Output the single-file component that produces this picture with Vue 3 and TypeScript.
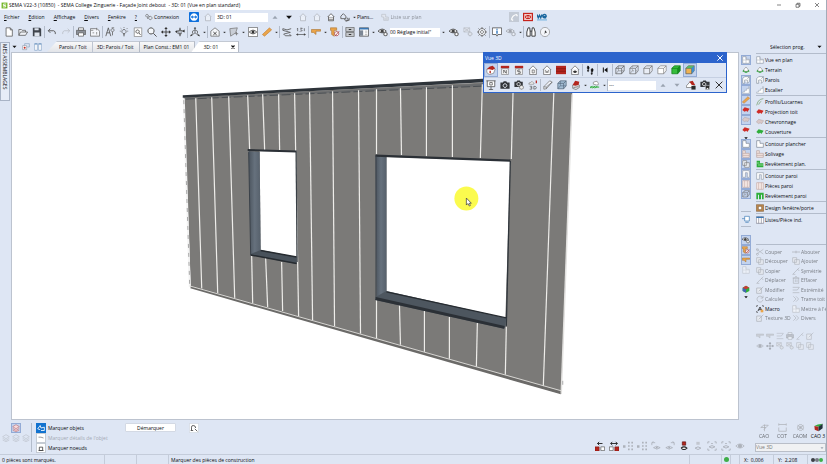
<script setup lang="ts">
import { h, ref } from 'vue'

type Shape = [d: string, fill?: string, stroke?: string, width?: number]

const dark = '#3f444c'
const red = '#b3261e'
const green = '#2fae3a'
const blue = '#3a78b5'
const orange = '#eba54a'

const house = 'M2 6 L6 2 L10 6 M3 5.5 V10.5 H9 V5.5'
const cube = 'M1 4 L4 1 H11 V7 L8 10.500 H1 Z M1 4 H8 V10.500 M8 4 L11 1'
const eye = 'M1 6 Q6 1 11 6 Q6 11 1 6 Z'
const page = 'M2.500 1 H7.500 L10 3.500 V11 H2.500 Z M7.500 1 V3.500 H10'
const gear = 'M6 3.500 A2.500 2.500 0 1 0 6.010 3.500 Z'

const icons: Record<string, Shape[]> = {
  logo: [['M1 1 H11 V11 H1 Z', '#6fb31e'], ['M9 3.500 H4 V6 H8 V8.500 H3', 'none', '#fff', 1.6]],
  minimize: [['M2 6 H10', 'none', '#333', 1.2]],
  restore: [['M2 4.500 H8 V10.500 H2 Z M4 4.500 V2.500 H10 V8.500 H8', 'none', '#333', 1.2]],
  close: [['M2 2 L10 10 M10 2 L2 10', 'none', '#333', 1.2]],
  closeLight: [['M2 2 L10 10 M10 2 L2 10', 'none', '#fff', 1.5]],
  closeBold: [['M3 3 L9 9 M9 3 L3 9', 'none', '#111', 2.2]],
  keys: [['M3 2 A2 2 0 1 0 3.010 2 M4 6 V9 M8 5 A2.500 2.500 0 1 0 8.010 5 M5 4 L7 6', 'none', '#666', 1]],
  viewer: [['M1 0 H11 Q12 0 12 1 V11 Q12 12 11 12 H1 Q0 12 0 11 V1 Q0 0 1 0', '#0d6fdc'], ['M6 1.500 A4.500 4.500 0 1 0 6.010 1.500', '#fff'], ['M2 6 L4.500 4 V5.300 H7.500 V4 L10 6 L7.500 8 V6.700 H4.500 V8 Z', '#0d6fdc']],
  house: [[house, '#fff', '#6c727b', 1]],
  houseFloor: [[house, '#fff', '#555', 1], ['M3.500 7 H8.500 M3.500 9 H8.500', 'none', '#888', 1]],
  up: [['M3 8 L6 4.500 L9 8 Z', '#9aa3b0']],
  down: [['M2.500 4.500 H9.500 L6 8.500 Z', '#111']],
  downGrey: [['M3 4.500 H9 L6 8 Z', '#9aa3b0']],
  dot: [['M4.500 5 H7.500 L6 7 Z', '#222', '#222', 0.6]],
  link: [['M1 5 L4 2 L7 5 V8 H1 Z M6 8 A2 2 0 1 0 8 7 M7 10 L11 10 V7', 'none', '#555', 1]],
  list: [['M1 2 H7 V6 H11 V11 H4 V6 H1 Z', '#e4e8ef', '#888', 1], ['M5 8 H10 M5 9.500 H10', 'none', '#888', 0.7]],
  phone: [['M0 0 H12 V12 H0 Z', '#c3cad5'], ['M3 9 Q4 4 9 3 M3 9 L5 10 M9 3 L10 5', 'none', '#fff', 1.5]],
  mail: [['M0 1 H12 V11 H0 Z', '#c6231d'], ['M2 3 H10 V9 H2 Z M2 3 L6 6.500 L10 3 M2 9 L5 6 M10 9 L7 6', 'none', '#fff', 0.9]],
  we: [['M0 3 L1.500 7 L3 4 L4.500 7 L6 3 M7 5.500 H11 Q11 3 9 3 Q7 3 7 5.500 Q7 7.500 11 7', 'none', '#19679f', 1.6], ['M0 9.500 H12', 'none', '#4fa4d8', 1]],
  newFile: [[page, '#fff', '#555', 0.9]],
  open: [['M1 10 V3 H4 L5 4 H9 V6 M1 10 L3 6 H11.500 L9 10 Z', '#eef1f6', '#555', 0.9]],
  save: [['M1 1 H9.500 L11 2.500 V11 H1 Z', dark], ['M3 1.500 H8 V4 H3 Z M3 6.500 H9 V11 H3 Z', '#dfe5ee']],
  undo: [['M4 2 L1.500 4.500 L4 7 M1.500 4.500 H8 Q10.500 5 10 8.500', 'none', '#555', 1.1]],
  redo: [['M8 2 L10.500 4.500 L8 7 M10.500 4.500 H4 Q1.500 5 2 8.500', 'none', '#888', 1]],
  print: [['M3 1 H9 V4 H3 Z', '#fff', '#555', 0.9], ['M0.500 4 H11.500 V9 H0.500 Z', '#8b9098', '#555', 0.8], ['M3 7 H9 V11 H3 Z', '#fff', '#555', 0.8]],
  plot: [['M7 2 H0.500 V11 H11.500 V5 L8.500 2 H7', '#f4f6fa', '#666', 0.9], ['M8 1 V4 M8 6 V9 M3 7 H5 M1 4 H4', 'none', '#777', 0.9]],
  lamp: [['M1 11 L4 1 L7 11 M2 7 H6', 'none', '#555', 1], ['M9 2 A1.800 1.800 0 1 0 9.010 2 M9 6 V10 M8 1 H11', 'none', '#666', 1]],
  bulb: [['M6 3 A2.500 2.500 0 1 0 6.010 3 M5 9 H7 M5 10.500 H7 M6 0 V1 M1 5 H2 M10 5 H11 M2 1.500 L3 2.500 M10 1.500 L9 2.500', 'none', '#555', 0.9]],
  preview: [['M1.500 1 H10.500 V11.500 H1.500 Z', '#fff', '#777', 0.8], ['M5.500 3.500 A2 2 0 1 0 5.510 3.500 M7 7 L9 9.500', 'none', '#444', 1]],
  zoom: [['M4.800 1 A3.700 3.700 0 1 0 4.810 1 M7.500 7.500 L11.500 11.500', '#f4f7fb', '#555', 1.2]],
  move: [['M6 1 V11 M1 6 H11', 'none', '#333', 1], ['M6 0 L8 2.500 H4 Z M6 12 L8 9.500 H4 Z M0 6 L2.500 4 V8 Z M12 6 L9.500 4 V8 Z', '#333']],
  orbit: [['M1 6 Q6 2 11 5 M1 6 Q4 9 8 8 M6 1 Q3 6 6 11 Q9 6 6 1', 'none', '#555', 0.9], ['M0 5 L3 4 L2.500 7 Z M11.500 3 V6.500 L8.500 5 Z', '#333']],
  axes: [['M6 0.500 V7 M6 7 L1 10.500 M6 7 L11 10.500 M3 8 V5 L6 3.500 L9 5 V8', 'none', '#555', 0.9], ['M6 0 L7.500 2 H4.500 Z M0 11 L3 10.500 L1.500 8.500 Z M12 11 L9 10.500 L10.500 8.500 Z', '#444']],
  houseX: [['M1 5 L6 1 L11 5 V11 H1 Z', '#f5f7fa', '#666', 0.9], ['M4 6 L8 9.500 M8 6 L4 9.500', 'none', '#333', 1]],
  plane: [['M1 2 L10 1 L8 7 L2 11 Z', '#c9ced6', '#777', 0.9], ['M7 8 L11 8 M9 6 V10', 'none', '#777', 1]],
  eyeBox: [['M0.500 0.500 H11.500 V11.500 H0.500 Z', '#fff', '#555', 0.8], ['M1.500 6 Q6 1.500 10.500 6 Q6 10.500 1.500 6 Z', '#fff', '#444', 1], ['M6 4.200 A1.800 1.800 0 1 0 6.010 4.200', '#333']],
  beam: [['M0.500 9 L9 1 L11.500 3.500 L3 11 Z', orange, '#bd7a2f', 0.7]],
  stack: [['M1 2 L6 3.500 L11 2 M1 4 L10 6.500 M10 6.500 L2 8.500 M2 8.500 L4 10.500 H11 L9 8.500 M1 2 V4', 'none', '#555', 1]],
  measure: [['M1 2.500 L2 1.500 V5 M4 4.800 V5.200 M5 1.500 H7.500 L6 3 L7.500 4.500 L5 5 M10 1.500 V5 M1 9 H11', 'none', '#444', 0.8], ['M0 9 L2.500 7.500 V10.500 Z M12 9 L9.500 7.500 V10.500 Z', '#444']],
  roof: [['M0.500 3 H11.500 V5 H6 V9 L3 6.500 H0.500 Z', orange, '#a5702f', 0.7]],
  roofGear: [['M0.500 1 H8 V4 H5 V11 L2 9 V4 H0.500 Z', orange, '#a5702f', 0.7], ['M8 5.500 A2.500 2.500 0 1 0 8.010 5.500 M6 11 L11 5', '#fff', '#a33', 0.9]],
  cabinet: [['M1 0.500 H11 V5.500 H1 Z M1 6.500 H11 V11.500 H1 Z', '#c5c8cc', '#666', 0.9], ['M4.500 3 H7.500 M4.500 9 H7.500', 'none', '#333', 1.3]],
  panelWin: [['M0.500 1 H11.500 V11 H0.500 Z', '#fff', '#444', 0.9], ['M0.500 1 H11.500 V3 H0.500 Z', blue], ['M1 4 H5 V10.500 H1 Z', '#7c8795'], ['M7 5 H10 M7 7 H10 M7 9 H10', 'none', '#999', 0.7]],
  eyeGear: [['M0 5 Q5 0 10 5 Q5 9 0 5 Z', '#fff', '#444', 1], ['M5 3 A2 2 0 1 0 5.010 3', '#444'], ['M9 6.500 A2 2 0 1 0 9.010 6.500', '#fff', '#666', 1.3]],
  layersGear: [['M1 1 H8 V6 H1 Z M1 1 L8 6 M8 1 L1 6', '#e4e8ee', '#777', 0.8], ['M8.500 6 A2.300 2.300 0 1 0 8.510 6', '#ddd', '#777', 1.2]],
  gear: [['M6 1.800 A4.200 4.200 0 1 0 6.010 1.800', '#f1f4f9', '#666', 1], ['M6 4.200 A1.800 1.800 0 1 0 6.010 4.200 M6 0 V2 M6 10 V12 M0 6 H2 M10 6 H12 M1.800 1.800 L3 3 M10.200 1.800 L9 3 M1.800 10.200 L3 9 M10.200 10.200 L9 9', 'none', '#666', 1]],
  info: [['M0.500 1 H11.500 V9 H7 L6 11 L5 9 H0.500 Z', '#fff', '#444', 0.9], ['M6 2 V3.300 M6 4.300 V8', 'none', '#1765b5', 1.5]],
  binoc: [['M1 11 V6 L2.500 1 H4.500 L5 6 V11 Z M7 11 V6 L7.500 1 H9.500 L11 6 V11 Z M5 5 H7', '#fff', '#333', 1.1]],
  disc: [['M6 0.500 A5.500 5.500 0 1 0 6.010 0.500', '#f3f5f9', '#888', 0.8], ['M6 4 L8.500 6.500 L6.500 7 L5.500 9 Z', '#333']],
  winRed: [['M1 4 H7 V10 H1 Z', '#fff', '#7c8795', 0.8], ['M4 4 V1 H11 V6 H8', 'none', '#7c98b8', 0.9], ['M2.500 7 A1.500 1.500 0 1 0 5.500 7 A1.500 1.500 0 1 0 2.500 7', '#c62a22']],
  split: [['M1 1 H5 V11 H1 Z M7 1 H11 V11 H7 Z', '#fff', '#7b9cc2', 0.9], ['M1 1.500 H5 M7 1.500 H11', 'none', '#5787bb', 1.3]],
  persp: [['M1 5 L6 3 L11 5 L9 10 L4 11.500 L1 9 Z', '#fff', '#777', 0.8], ['M1 5 L4 2 L8 1 L11 4 L8 6 L4 5 Z', red], ['M5 7 V10', 'none', red, 1.6]],
  north: [['M1 1 H11 V4 H1 Z', red], ['M2 4.500 H10 V11.500 H2 Z', '#fff', '#777', 0.8], ['M4.500 10 V6 L7.500 10 V6', 'none', '#444', 0.9]],
  south: [['M1 1 H11 V4 H1 Z', red], ['M2 4.500 H10 V11.500 H2 Z', '#fff', '#777', 0.8], ['M7.500 6 H4.500 V8 H7.500 V10 H4.500', 'none', '#444', 0.9]],
  east: [['M1 6 L6 1 L11 6 M2 5.500 V11.500 H10 V5.500', '#fff', '#555', 0.8], ['M5 6 H7.500 V9.500 H5 Z', 'none', '#555', 0.8]],
  west: [['M1 6 L6 1 L11 6 M2 5.500 V11.500 H10 V5.500', '#fff', '#555', 0.8], ['M4 6 L5 9.500 L6 7 L7 9.500 L8 6', 'none', '#555', 0.7]],
  bricks: [['M0 1 H12 V11 H0 Z', red], ['M0 4.500 H12 M0 7.500 H12', 'none', '#7d130e', 0.8]],
  houseEye: [['M1 6 L6 1 L11 6 M2 5.500 V11.500 H10 V5.500', '#fff', '#555', 0.8], ['M3.500 8 Q6 5 8.500 8 Q6 11 3.500 8', '#333']],
  feet: [['M3.500 1 Q6 2 4.500 5.500 L3 5 Q2 2 3.500 1 M3 6 L4.700 6.300 L4 8 L3 7.500 Z M8.500 4 Q11 5 9 8.500 L7.500 8 Q6.500 5 8.500 4 M7.500 9 L9 9.400 L8.500 11.500 L7.300 11 Z', '#111', '#111', 0.5]],
  walk: [['M4 3 V9', 'none', '#111', 1.2], ['M5 6 L9 3 V9 Z', '#111']],
  cubeWire: [[cube, 'none', '#555', 0.8], ['M4 1 V7 H11 M4 7 L1 10.500', 'none', '#777', 0.7]],
  cubeDash: [[cube, 'none', '#666', 0.8], ['M4 1 V3 M4 5 V7 H6 M8 7 H10 M4 7 L1 10.500', 'none', '#888', 0.8]],
  cubeOpen: [[cube, '#e9edf5', '#666', 0.8]],
  cubeWhite: [[cube, '#fff', '#777', 0.8]],
  cubeGreen: [[cube, '#35bd3b', '#14801c', 0.9], ['M8 4 L11 1 V7 L8 10.500 Z', '#168b20']],
  cubeColor: [[cube, '#efb252', '#555', 0.8], ['M1 4 L4 1 H11 L8 4 Z', '#58b86a'], ['M8 4 L11 1 V7 L8 10.500 Z', '#3c8fd0']],
  cubeBlue: [[cube, '#a3bdd5', '#55697d', 0.9], ['M4 1 V7 H11 M4 7 L1 10.500', 'none', '#55697d', 0.7]],
  screen: [['M0.500 1 H11.500 M1.500 1 V8 H10.500 V1 M6 8 V11.500 M3.500 11.500 H8.500', '#fff', '#444', 0.9], ['M4.500 3 H7.500 V6 H4.500 Z', 'none', '#555', 0.9]],
  camera: [['M0.500 3 H3.500 L4.500 1.500 H7.500 L8.500 3 H11.500 V10.500 H0.500 Z', '#33363b'], ['M6 4.500 A2.200 2.200 0 1 0 6.010 4.500', 'none', '#dfe5ee', 1.2]],
  cameraGear: [['M0.500 2 H3 L4 0.500 H7 L8 2 H10.500 V8.500 H0.500 Z', '#33363b'], ['M5.500 3 A2 2 0 1 0 5.510 3', 'none', '#fff', 1], ['M9 6.500 A2.300 2.300 0 1 0 9.010 6.500', '#eee', '#777', 1]],
  cameraSave: [['M0.500 2 H3 L4 0.500 H7 L8 2 H11.500 V8.500 H0.500 Z', '#33363b'], ['M5 3 A2 2 0 1 0 5.010 3', 'none', '#fff', 1], ['M6.500 6.500 H11.500 V11.500 H6.500 Z', '#2b2b2b', '#dfe5ee', 0.6], ['M8 9.500 H10 V11 H8 Z', '#eee']],
  cloud3d: [['M1 5 Q1 3 3 3 Q5 0 7 4 Q8 5 6 5 Z', '#fff', '#777', 0.8], ['M10 0.500 V4', 'none', red, 1.5], ['M2 7.500 H4.500 V11 H2 M3 9.200 H4.500 M7 7.500 V11 Q10.500 11 10 9 Q10 7.500 7 7.500', 'none', '#555', 0.8]],
  bar: [['M1 8 L8 1 L11 2.500 L4 10.500 L1 11 Z M1 8 L4 8.500 L11 2.500 M4 8.500 V10.500', '#f4f6fa', '#666', 0.8]],
  roofRed: [['M2 6 L6 5 L10 6 V9 L6 11.500 L2 10 Z', '#e4e6ea', '#666', 0.8], ['M2 6 L5 1 L10 2 L9 6 L5 7 Z', red], ['M3 9 L9 8', 'none', '#555', 0.8]],
  meadow: [['M4 5 Q3 2 6 2 Q9 0 10 4 Q11 6 8 6 Z', '#fff', '#777', 0.8], ['M0 10 L3 7 M3 10 L6 7 M6 10 L9 7 M0 8.500 H11', 'none', green, 1.2]],
  tent: [['M0.500 7 L5 2 L10 7 V9 H0.500 Z', '#fff', '#666', 0.8], ['M4 2 L8 1 L11 6 L7 6 Z', red], ['M6.500 7 H11.500 V11.500 H6.500 Z', '#2b2b2b']],
  plan: [['M1 1 H6 V5 H11 V11 H1 Z', '#fff', '#8892a0', 0.9], ['M6 1 V11 M1 6 H11', 'none', '#aab3bf', 0.8]],
  terrain: [['M0.500 8 Q3 4 6 6 Q9 4 11.500 8 L6 10.500 Z', green], ['M3 5 L6 1.500 L9 5 V8 H3 Z', '#fff', '#777', 0.8]],
  walls: [['M1 4 L4 1 H11 V8 L8 11 M1 4 V11 H4 V6 H8 V11 M8 4 L11 1', '#fff', '#7b8694', 0.9]],
  stairs: [['M1 11 V9 H4 V6.500 H7 V4 H10 V1 H11 V11 Z', '#fff', '#98a2af', 0.8]],
  profil: [['M1 11 Q2 4 7 2 L11 1 M4 10 Q5 6 8 5', 'none', '#6f9a63', 1]],
  roofProj: [['M0.500 6 L4 2 L11.500 4 L8 9 L6.500 7 L4 8.500 Z', '#cf2c26']],
  rafters: [['M0.500 6 L4 2 L11.500 4 L8 9 L6.500 7 L4 8.500 Z', '#d9c9c9', '#a99', 0.6]],
  cover: [['M0.500 6 L4 2 L11.500 4 L8 9 L6.500 7 L4 8.500 Z', green]],
  slab: [['M1 1 H6 V5 H11 V11 H1 Z', '#fff', '#6f7987', 0.9]],
  joists: [['M1 1 H5 V5 H11 V11 H1 Z M1 5 H5 M1 8 H11', '#f3e6e1', '#b59b96', 0.9]],
  cladPlan: [['M1 1 H6 V5 H11 V11 H1 Z', green], ['M1 4.500 H5 M3 7.500 H11', 'none', '#dff2e0', 0.8]],
  wallOut: [['M1 1 H11 V11 H8 V4 H5 V11 H1 Z', '#fff', '#8892a0', 0.9]],
  wallPieces: [['M1 1 H11 V11 H1 Z M4 1 V11 M8 1 V11', '#f8ece8', '#c1a49e', 0.9]],
  wallClad: [['M0.500 1 H11.500 V11 H9 V4 H7.500 V11 H4.500 V4 H3 V11 H0.500 Z', green]],
  frame: [['M0.500 1 H11.500 V11 H0.500 Z', '#c08a4f', '#6c4a23', 0.7], ['M3.500 3.500 H8.500 V8.500 H3.500 Z', '#fff', '#6c4a23', 0.8]],
  lists: [['M0.500 1 H11.500 V11 H0.500 Z M4 1 V11 M8 1 V11', '#fff', '#667', 0.8], ['M0.500 2 H11.500', 'none', blue, 2]],
  monitor: [['M4 2 H11 V9 H4 Z M0 5.500 H4 M5 11 H10', '#fff', blue, 1]],
  box3d: [['M1 4 L6 1 L11 4 V9 L6 11.500 L1 9 Z', green], ['M1 4 L6 6.500 V11.500 L1 9 Z', '#4560b5'], ['M1 4 L6 1 L11 4 L6 6.500 Z', '#c93a35']],
  cut: [['M1 2 L11 9 M1 9 L11 2 M2 8 A1.500 1.500 0 1 0 2.010 8 M2 1 A1.500 1.500 0 1 0 2.010 1', 'none', '#777', 0.9]],
  join: [['M0 6 H12 M6 4 V8', 'none', '#777', 1]],
  copy: [['M1 1 H7 V8 H1 Z M4 4 H11 V11 H4 Z', '#edf0f5', '#777', 0.9]],
  diag: [['M1 11 L11 1 M1 11 H5 M8 3 L11 6', 'none', '#777', 0.9]],
  trash: [['M2 3 H10 V11 H2 Z M1 3 H11 M4.500 1 H7.500 M5 5 V9 M7.500 5 V9', 'none', '#777', 0.9]],
  edit: [['M1 3 H8 V11 H1 Z M4 8 L11 1', '#edf0f5', '#777', 1]],
  lines: [['M1 2 H11 M1 6 H8 M1 10 H11 M8 6 L11 2', 'none', '#777', 0.9]],
  calc: [['M10 4 A4.500 4.500 0 1 0 10.500 7 M10.500 1 V4.500 H7', 'none', '#777', 1]],
  macro: [['M1 3 V1 H3 M9 1 H11 V3 M3 11 H1 V9', 'none', '#444', 1], ['M3 9 L6 3 L9 9 M4 7 H8', 'none', '#333', 1.3], ['M7 7 H11 V11 H7 Z', orange]],
  chev: [['M2 2 L6 6 L2 10 M6 2 L10 6 L6 10', 'none', '#777', 0.9]],
  layersRed: [['M1 4 L6 1 L11 4 L6 7 Z M1 6.500 L6 9.500 L11 6.500 M1 9 L6 11.500 L11 9', '#f7dcdc', '#b65a62', 0.8]],
  layers: [['M1 4 L6 1 L11 4 L6 7 Z M1 6.500 L6 9.500 L11 6.500 M1 9 L6 11.500 L11 9', 'none', '#777', 0.8]],
  markObj: [['M0 0 H12 V12 H0 Z', '#1172cf'], ['M2 7 L5 3 L6 6 L10 5 V9 H6 M2 7 L5 8', 'none', '#fff', 1]],
  markDetail: [['M0.500 0.500 H11.500 V11.500 H0.500 Z', '#fff', '#a8b0bb', 0.8], ['M3 5 H6 L9 6', 'none', '#888', 1]],
  markNode: [['M0.500 0.500 H11.500 V11.500 H0.500 Z', '#fff', '#a8b0bb', 0.8], ['M4 5 H8 V9 H4 Z M3 9 H9', 'none', '#444', 1]],
  pick: [['M0.500 0.500 H11.500 V11.500 H0.500 Z', '#fff', '#c3cad5', 0.6], ['M3 9 V5 Q3 3 5 3 Q8 3 8 6 M7 7 L10 10 M2 9 H5', 'none', '#444', 1]],
  swapL: [['M0 7 H5 V12 H0 Z', red, '#7d130e', 0.6], ['M7 7 H11.500 V11.500 H7 Z', '#fff', '#555', 0.8], ['M3 3 H9 M5 1 L3 3 L5 5', 'none', '#111', 1]],
  swapR: [['M0.500 7 H5 V11.500 H0.500 Z', '#fff', '#555', 0.8], ['M7 7 H12 V12 H7 Z', red, '#7d130e', 0.6], ['M2 3 H10 M4 1 L2 3 L4 5 M8 1 L10 3 L8 5', 'none', '#111', 1]],
  tree: [['M0 5 H3 V8 H0 Z M6 1 H8 V3 H6 Z M6 5 H8 V7 H6 Z M6 9 H8 V11 H6 Z M10 1 H12 V3 H10 Z M10 5 H12 V7 H10 Z M10 9 H12 V11 H10 Z', '#666']],
  eyeTurn: [['M3 8 Q7 4.500 11 8 Q7 11.500 3 8 Z M1 5 V2 H5 M1 2 L3 0.500', 'none', '#555', 0.9], ['M7 7 A1 1 0 1 0 7.010 7', '#555']],
  eyeTurnR: [['M1 8 Q5 4.500 9 8 Q5 11.500 1 8 Z M11 5 V2 H7 M11 2 L9 0.500', 'none', '#555', 0.9], ['M5 7 A1 1 0 1 0 5.010 7', '#555']],
  lampRed: [['M4 1 H8 V5 H4 Z', red, '#5d110d', 0.8], ['M2.500 8.500 Q6 5.500 9.500 8.500 Q6 12 2.500 8.500', '#fff', '#222', 1.3]],
  lampGrey: [['M4 1 H8 V4.500 H4 Z', '#999'], ['M2.500 8.500 Q6 5.500 9.500 8.500 Q6 12 2.500 8.500', 'none', '#555', 1]],
  eyeFrame: [['M1 3 V1 H3 M9 1 H11 V3 M11 9 V11 H9 M3 11 H1 V9 M2.500 7 Q6 4 9.500 7 Q6 10 2.500 7 M5 3 H7', 'none', '#555', 1]],
  eye: [[eye, 'none', '#666', 0.9], [gear, '#666']],
  cao: [['M1 6 H8 L11 3 H5 Z M5 9 L8 6 M6 2 V11', 'none', '#888', 0.9]],
  cot: [['M1 2 H11 M1 0.500 V3.500 M11 0.500 V3.500 M1 6 V11 H11 V6', 'none', '#888', 0.9]],
  caom: [['M6 2 A4 4 0 1 0 6.010 2 M6 4.500 A1.500 1.500 0 1 0 6.010 4.500 M2 3 L10 9 M10 3 L2 9', 'none', '#888', 0.9]],
  cao3: [['M0.500 4 L5 2 L11.500 1 L7 5 Z', green], ['M0.500 4 L6 5 V11 L1 9 Z', red], ['M6 5 L11.500 1 V7 L6 11 Z', '#20303a']],
}

const Icon = (props: { name: string }) =>
  h(
    'svg',
    { class: 'icon', viewBox: '0 0 12 12', 'aria-hidden': 'true' },
    (icons[props.name] ?? []).map(([d, fill, stroke, width]) =>
      h('path', { d, fill: fill ?? 'none', stroke: stroke ?? 'none', 'stroke-width': width ?? 1 }),
    ),
  )
Icon.props = ['name']

// In a tool strip '|' is a separator, a '~' suffix means disabled and a '*' suffix means active.
interface Tool { kind: 'sep' | 'drop' | 'tool'; icon: string; off: boolean; on: boolean }
const parse = (spec: string): Tool[] =>
  spec.split(' ').map((s) => ({
    kind: s === '|' ? 'sep' : s === 'dot' ? 'drop' : 'tool',
    icon: s.replace(/[~*]/, ''),
    off: s.endsWith('~'),
    on: s.endsWith('*'),
  }))

const toolsA = parse('newFile open save | undo redo~ | print plot | lamp bulb preview zoom move orbit | axes dot | houseX dot plane dot eyeBox beam dot | stack measure | roof dot roofGear | cabinet panelWin dot eyeGear')
const toolsB = parse('eyeGear layersGear~ gear | info eyeGear~ dot | binoc disc')
const menus = [['F', 'ichier'], ['E', 'dition'], ['A', 'ffichage'], ['D', 'ivers'], ['F', 'enêtre'], ['?', '']]
const nav = parse('up down house~ house~ houseFloor link dot')
const viewTools = parse('persp* north south east west bricks houseEye | feet | walk | cubeWire cubeDash cubeOpen cubeWhite cubeGreen cubeColor*')
const viewTools2 = parse('screen camera cameraGear cloud3d | bar cubeBlue roofRed dot meadow dot |')
const viewTools3 = parse('up downGrey tent cameraSave close')
const markTools = parse('swapL swapR tree~ tree~ eyeTurn~ eyeTurnR~ lampRed lampGrey~ eyeFrame~ eyeFrame~ eye~')
const tabs = ['Parois / Toit', '3D: Parois / Toit', 'Plan Const.: EM1 01']

const sections = [
  [['plan', 'Vue en plan'], ['terrain', 'Terrain'], ['walls', 'Parois'], ['stairs', 'Escalier']],
  [['profil', 'Profils/Lucarnes'], ['roofProj', 'Projection toit'], ['rafters', 'Chevronnage'], ['cover', 'Couverture']],
  [['slab', 'Contour plancher'], ['joists', 'Solivage'], ['cladPlan', 'Revêtement plan.']],
  [['wallOut', 'Contour paroi'], ['wallPieces', 'Pièces paroi'], ['wallClad', 'Revêtement paroi']],
  [['frame', 'Design fenêtre/porte']],
  [['lists', 'Listes/Pièce ind.']],
]
const toggles = [
  parse('plan* terrain walls* stairs* beam* roofProj* rafters* roofProj'),
  parse('slab* joists* copy* wallOut* wallPieces* cubeDash*'),
  parse('monitor'),
  parse('eyeGear* roofGear* roof* plan~'),
  parse('box3d'),
]
const actions = [
  ['cut', 'Couper'], ['join', 'Abouter'], ['copy', 'Découper'], ['copy', 'Ajouter'],
  ['copy', 'Copier'], ['diag', 'Symétrie'], ['diag', 'Déplacer'], ['trash', 'Effacer'],
  ['edit', 'Modifier'], ['lines', 'Extrémité'], ['calc', 'Calculer'], ['chev', 'Trame toit'],
  ['macro', 'Macro'], ['plan', "Mettre à l'é"], ['edit', 'Texture 3D'], ['chev', 'Divers'],
]
const extras = ['roof', 'roof', 'lines', 'print', 'diag', 'edit', 'eye', 'move', 'layersGear', 'layersGear', 'copy', 'copy']
const modes = [['cao', 'CAO'], ['cot', 'COT'], ['caom', 'CAOM'], ['cao3', 'CAO 3']]
const marks = [['markObj', 'Marquer objets'], ['markDetail', "Marquer détails de l'objet"], ['markNode', 'Marquer noeuds']]

// Standing seams of the façade: x1, y1, x2, y2.
const seams = [
  [196, 98, 202, 289], [212, 97, 218, 293], [229, 96, 235, 298],
  [248, 95, 250, 150], [252, 256, 253, 303], [263, 94, 265, 150], [266, 258, 268, 307],
  [279, 94, 280, 150], [282, 262, 283, 311], [295, 93, 299, 316], [310, 92, 313, 320],
  [333, 91, 335, 327], [359, 90, 361, 334], [377, 89, 377, 154], [377, 300, 377, 339],
  [401, 88, 402, 155], [400, 305, 401, 345], [427, 87, 427, 156], [425, 311, 425, 352],
  [453, 85, 453, 157], [450, 317, 450, 359], [483, 84, 481, 158], [478, 323, 477, 367],
  [514, 82, 512, 159], [507, 327, 506, 375], [555, 80, 544, 387],
]

const program = ref('Sélection prog.')
const plan = ref('3D: 01')
const preset = ref('00 Réglage initial"')
const layer = ref('---')
</script>

<template>
  <div class="app">
    <header class="title">
      <Icon name="logo" />
      <span>SEMA V22-3 (10850)&nbsp; - SEMA College Zinguerie - Façade Joint debout&nbsp; - 3D: 01 (Vue en plan standard)</span>
      <div class="window-buttons">
        <button v-for="b in ['minimize', 'restore', 'close']" :key="b" :aria-label="b"><Icon :name="b" /></button>
      </div>
    </header>

    <nav class="menu">
      <div class="menu-items">
        <button v-for="m in menus" :key="m[0] + m[1]"><u>{{ m[0] }}</u>{{ m[1] }}</button>
      </div>
      <button class="labelled connect"><Icon name="keys" />Connexion</button>
      <button class="tool" aria-label="Assistance"><Icon name="viewer" /></button>
      <button class="tool off" aria-label="Étage"><Icon name="house" /></button>
      <input v-model="plan" class="plan-box" aria-label="Plan actif" />
      <button v-for="(t, i) in nav" :key="i" :class="[t.kind, { off: t.off }]" :aria-label="t.icon"><Icon :name="t.icon" /></button>
      <button class="labelled">Plans...</button>
      <button class="labelled off plan-list"><Icon name="list" />Liste sur plan</button>
      <div class="contact">
        <button class="tool" aria-label="Téléphone"><Icon name="phone" /></button>
        <button class="tool" aria-label="Courriel"><Icon name="mail" /></button>
        <button class="tool" aria-label="Transfert"><Icon name="we" /></button>
      </div>
    </nav>

    <div class="tools">
      <template v-for="(t, i) in toolsA" :key="i">
        <i v-if="t.kind === 'sep'" class="sep"></i>
        <button v-else :class="[t.kind, { off: t.off }]" :aria-label="t.icon"><Icon :name="t.icon" /></button>
      </template>
      <label class="preset">
        <select v-model="preset" aria-label="Réglage"><option>00 Réglage initial"</option></select>
        <Icon name="dot" />
      </label>
      <template v-for="(t, i) in toolsB" :key="i">
        <i v-if="t.kind === 'sep'" class="sep"></i>
        <button v-else :class="[t.kind, { off: t.off }]" :aria-label="t.icon"><Icon :name="t.icon" /></button>
      </template>
    </div>

    <div class="work">
      <div class="rail"><button>MES ASSEMBLAGES</button></div>

      <main>
        <div class="tabs">
          <div class="tab-tools">
            <button aria-label="Menu"><Icon name="down" /></button>
            <button aria-label="Fermer tout"><Icon name="winRed" /></button>
            <button aria-label="Mosaïque"><Icon name="split" /></button>
          </div>
          <button v-for="t in tabs" :key="t" class="tab">{{ t }}</button>
          <button class="tab active">3D: 01<Icon name="closeBold" /></button>
        </div>

        <section class="stage">
          <svg class="scene" viewBox="12 53 727 366" role="img" aria-label="Façade en 3D">
            <defs>
              <linearGradient id="reveal" x1="0" x2="1">
                <stop offset="0" stop-color="#4b545e" /><stop offset="0.5" stop-color="#66717d" /><stop offset="1" stop-color="#56606b" />
              </linearGradient>
            </defs>
            <path d="M184 97 L573 78 L573 94 L562 394 L191 287 Z" fill="#7b7a78" />
            <path d="M184 98 L573 79 V82 L184 99 Z" fill="#6a6c6e" />
            <path d="M183 95 L573 73.500 V77.500 L183 97.500 Z" fill="#2e343a" />
            <path d="M186 99 L573 82" stroke="#43484d" stroke-dasharray="9 3" stroke-width="0.800" fill="none" />
            <path d="M184 98 L190 287" stroke="#f4f4f4" stroke-width="2" fill="none" />
            <path d="M184 100 L190 287" stroke="#a8a8a8" stroke-dasharray="4 5" fill="none" />
            <line v-for="(s, i) in seams" :key="i" :x1="s[0]" :y1="s[1]" :x2="s[2]" :y2="s[3]" stroke="#eeedea" stroke-width="1.200" />
            <path d="M191 287 L562 393" stroke="#6b6a68" stroke-width="3" fill="none" />
            <path d="M190 286 L562 391" stroke="#d8d7d4" stroke-width="1" fill="none" />
            <path d="M573 94 L562 394" stroke="#e2e1df" stroke-width="1.500" fill="none" />
            <path d="M563.500 381 V385" stroke="#aaa" fill="none" />

            <path d="M260 151 L296 152 L297 258 L261 252 Z" fill="#fff" />
            <path d="M249 151 L260 152 L261 252 L251 256 Z" fill="url(#reveal)" />
            <path d="M248 150 L297 151.500" stroke="#2b3036" stroke-width="2" />
            <path d="M249 152 L251 255" stroke="#3a4149" />
            <path d="M296.500 152 L297.500 262" stroke="#3a4046" stroke-width="1.200" />
            <path d="M251 254 L261 250 L297 257 L297 264 L251 255 Z" fill="#49525b" />
            <path d="M261 250.500 L297 257 M251 255 L297 263.500" stroke="#262b30" stroke-width="1.500" fill="none" />

            <path d="M387 157 L511 161 L506 319 L387 293 Z" fill="#fff" />
            <path d="M376 155 L387 156 L387 293 L377 298 Z" fill="url(#reveal)" />
            <path d="M376 155.500 L511 160.500" stroke="#2b3036" stroke-width="2.300" />
            <path d="M376.500 156 V298" stroke="#3a4149" />
            <path d="M511 161 L507 326" stroke="#2f353b" stroke-width="1.300" />
            <path d="M376 297 L387 291 L507 318 L506 327 L505 329 L376 300 Z" fill="#4d565f" />
            <path d="M387 292 L507 318" stroke="#262b30" stroke-width="1.200" />
            <path d="M376 298.500 L505 327.500" stroke="#2b3036" stroke-width="3" />

            <circle cx="467" cy="198.500" r="12" fill="#fbfb4e" />
            <path d="M467 198 V205 L468.500 203.500 L470 206 L471 205.500 L470 203.200 H472 Z" fill="#fff" stroke="#333" stroke-width="0.700" />
          </svg>

          <div class="palette">
            <div class="palette-title">Vue 3D<button aria-label="Fermer"><Icon name="closeLight" /></button></div>
            <div class="palette-row">
              <template v-for="(t, i) in viewTools" :key="i">
                <i v-if="t.kind === 'sep'" class="sep"></i>
                <button v-else :class="[t.kind, { on: t.on }]" :aria-label="t.icon"><Icon :name="t.icon" /></button>
              </template>
            </div>
            <div class="palette-row">
              <template v-for="(t, i) in viewTools2" :key="i">
                <i v-if="t.kind === 'sep'" class="sep"></i>
                <button v-else :class="[t.kind, { on: t.on }]" :aria-label="t.icon"><Icon :name="t.icon" /></button>
              </template>
              <input v-model="layer" aria-label="Vue" />
              <button v-for="t in viewTools3" :key="t.icon" class="tool" :aria-label="t.icon"><Icon :name="t.icon" /></button>
            </div>
          </div>
        </section>
      </main>

      <aside>
        <label class="program">
          <select v-model="program" aria-label="Sélection du programme"><option>Sélection prog.</option></select>
          <Icon name="down" />
        </label>
        <div class="side">
          <div class="toggles">
            <div v-for="(g, i) in toggles" :key="i" class="toggle-group">
              <button v-for="(t, j) in g" :key="j" :class="{ on: t.on, off: t.off }" :aria-label="t.icon"><Icon :name="t.icon" /></button>
              <span v-if="i === 0 || i === 4" class="more"><Icon name="down" /></span>
            </div>
          </div>
          <div class="commands">
            <ul v-for="(s, i) in sections" :key="i" class="section">
              <li v-for="c in s" :key="c[1]"><button><Icon :name="c[0]" />{{ c[1] }}</button></li>
            </ul>
            <div class="actions">
              <button v-for="a in actions" :key="a[1]" :class="{ off: a[1] !== 'Macro' }"><Icon :name="a[0]" />{{ a[1] }}</button>
            </div>
            <div class="extras">
              <button v-for="(e, i) in extras" :key="i" class="off" :aria-label="e"><Icon :name="e" /></button>
            </div>
          </div>
        </div>
      </aside>
    </div>

    <footer>
      <div class="layers">
        <button class="on" aria-label="Calques"><Icon name="layersRed" /></button>
        <div><button v-for="n in 3" :key="n" class="off" :aria-label="'Calque ' + n"><Icon name="layers" /></button></div>
      </div>
      <div class="marks">
        <button v-for="(m, i) in marks" :key="m[0]" :class="{ dim: i === 1 }"><Icon :name="m[0]" />{{ m[1] }}</button>
      </div>
      <button class="unmark">Démarquer</button>
      <button class="picker" aria-label="Choisir"><Icon name="pick" /></button>
      <div class="mark-tools">
        <button v-for="(t, i) in markTools" :key="i" :class="['tool', { off: t.off }]" :aria-label="t.icon"><Icon :name="t.icon" /></button>
      </div>
      <div class="modes">
        <div class="mode-row">
          <button v-for="(m, i) in modes" :key="m[1]" :class="{ off: i < 3 }"><Icon :name="m[0]" />{{ m[1] }}</button>
        </div>
        <label class="view"><select disabled aria-label="Vue active"><option>Vue 3D</option></select><Icon name="downGrey" /></label>
      </div>
    </footer>

    <div class="status">
      <span class="cell first">0 pièces sont marqués.</span>
      <span class="cell small"></span>
      <span class="cell small"></span>
      <span class="cell message">Marquer des pièces de construction</span>
      <span class="cell small"></span>
      <span class="cell tiny"><b class="led"></b></span>
      <span class="cell tiny"></span>
      <span class="cell coord">X:&nbsp; 0,006</span>
      <span class="cell coord">Y:&nbsp; 2,208</span>
      <span class="cell leds"><b class="led dark"></b><b class="led grey"></b><b class="led"></b></span>
    </div>
  </div>
</template>

<style>
body {
  margin: 0;
  overflow: hidden;
}
</style>

<style scoped>
.app {
  --bar: #dee6f4;
  --line: #b3bccb;
  display: flex;
  flex-direction: column;
  height: 100vh;
  overflow: hidden;
  box-sizing: border-box;
  border-right: 1px solid #a4abb8;
  background: var(--bar);
  color: #08090c;
  font: 500 5px/8px 'Open Sans', 'Noto Sans', sans-serif;
  white-space: nowrap;
}
button, input, select {
  margin: 0;
  padding: 0;
  border: 0;
  background: none;
  color: inherit;
  font: inherit;
  box-sizing: border-box;
}
select {
  appearance: none;
  opacity: 1;
}
.icon {
  display: block;
  flex: none;
  width: 10px;
  height: 10px;
}
.off {
  opacity: 0.4;
  filter: grayscale(1);
}
.on {
  background: #c3d3ee;
  box-shadow: inset 0 0 0 1px #93abd6;
}
.sep {
  flex: none;
  width: 1px;
  height: 12px;
  background: var(--line);
}
.tool, .drop {
  display: flex;
  align-items: center;
  justify-content: center;
  flex: none;
  width: 14px;
  height: 14px;
}
.drop {
  width: 5px;
}
.drop .icon {
  width: 7px;
  height: 7px;
}

.title {
  display: flex;
  align-items: center;
  flex: none;
  height: 10px;
  padding-left: 1px;
  gap: 1px;
  background: #fff;
}
.title > .icon {
  width: 7px;
  height: 7px;
}
.window-buttons {
  display: flex;
  gap: 13px;
  margin-left: auto;
  padding-right: 6px;
}
.window-buttons .icon {
  width: 6px;
  height: 6px;
}

.menu {
  display: flex;
  align-items: center;
  flex: none;
  height: 14px;
  padding-left: 4px;
}
.menu-items {
  display: flex;
  gap: 9px;
  width: 141px;
}
.labelled {
  display: flex;
  align-items: center;
  gap: 1px;
}
.labelled .icon {
  width: 8px;
  height: 8px;
}
.connect {
  width: 42px;
}
.plan-box {
  width: 53px;
  height: 9px;
  padding-left: 2px;
  background: #fff;
}
.plan-list {
  margin-left: 8px;
}
.contact {
  display: flex;
  margin: 0 auto 0 85px;
}

.tools {
  display: flex;
  align-items: center;
  flex: none;
  height: 16px;
  padding-left: 2px;
}
.preset {
  display: flex;
  align-items: center;
  width: 57px;
}
.preset select {
  flex: 1;
  min-width: 0;
  height: 9px;
  background: #fff;
}
.preset .icon {
  width: 7px;
  height: 7px;
}

.work {
  display: flex;
  flex: 1;
  min-height: 0;
}
.rail {
  flex: none;
  width: 11px;
  padding: 2px 1px 0 0;
  box-sizing: border-box;
}
.rail button {
  width: 10px;
  height: 59px;
  padding-bottom: 9px;
  border: 1px solid #a9b4c6;
  background: #e6ecf7;
  line-height: 8px;
  writing-mode: vertical-rl;
}
main {
  display: flex;
  flex-direction: column;
  flex: 1;
  min-width: 0;
}
.tabs {
  display: flex;
  align-items: flex-end;
  flex: none;
  height: 12px;
}
.tab-tools {
  display: flex;
  align-items: center;
  gap: 4px;
  height: 11px;
  width: 36px;
}
.tab-tools .icon {
  width: 8px;
  height: 8px;
}
.tab-tools button:first-child .icon {
  width: 7px;
  height: 7px;
}
.tab {
  height: 11px;
  padding: 0 5px 0 4px;
  border-top: 1px solid #c3c9d3;
  border-right: 1px solid #b4bac5;
  background: linear-gradient(#f8f8f9, #e2e4e8);
}
.tab-tools + .tab {
  padding-left: 12px;
  clip-path: polygon(10px 0, 100% 0, 100% 100%, 0 100%);
}
.tab.active {
  display: flex;
  align-items: center;
  gap: 12px;
  margin-left: -4px;
  padding: 0 2px 0 12px;
  background: #fff;
  clip-path: polygon(8px 0, 100% 0, 100% 100%, 0 100%);
}
.tab.active .icon {
  width: 6px;
  height: 6px;
}
.stage {
  position: relative;
  flex: 1;
  min-height: 0;
  border: 1px solid #bcc3cf;
  background: #fff;
}
.scene {
  display: block;
  width: 100%;
  height: 100%;
}
.palette {
  position: absolute;
  top: -1px;
  right: 11px;
  width: 244px;
  box-sizing: border-box;
  border: 1px solid #2c64cc;
  background: var(--bar);
}
.palette-title {
  display: flex;
  justify-content: space-between;
  align-items: center;
  height: 10px;
  padding: 0 2px 0 1px;
  background: #2c64cc;
  color: #fff;
}
.palette-title .icon {
  width: 8px;
  height: 8px;
}
.palette-row {
  display: flex;
  align-items: center;
  height: 14px;
}
.palette-row + .palette-row {
  border-top: 1px solid #c6d0e2;
}
.palette-row input {
  width: 48px;
  height: 9px;
  padding-left: 1px;
  background: #fff;
}

aside {
  flex: none;
  width: 87px;
  overflow: hidden;
}
.program {
  display: flex;
  align-items: center;
  height: 13px;
  margin-left: 17px;
  padding-right: 3px;
  border-bottom: 1px solid var(--line);
}
.program select {
  flex: 1;
  padding-left: 14px;
}
.program .icon {
  width: 7px;
  height: 7px;
}
.side {
  display: flex;
  gap: 5px;
  padding: 1px 0 0 2px;
}
.toggle-group {
  display: flex;
  flex-direction: column;
}
.toggle-group button {
  display: grid;
  place-items: center;
  width: 10px;
  height: 10px;
}
.toggle-group .icon {
  width: 8px;
  height: 8px;
}
.toggle-group .more {
  display: grid;
  place-items: center;
  height: 4px;
}
.toggle-group .more .icon {
  width: 6px;
  height: 6px;
}
.toggle-group:nth-child(3) {
  margin: 12px 0 8px;
  padding: 2px 0;
  border-top: 1px solid var(--line);
  border-bottom: 1px solid var(--line);
}
.toggle-group:nth-child(4) {
  margin-bottom: 9px;
}
.commands {
  flex: 1;
  min-width: 0;
}
.section {
  margin: 0 0 1px;
  padding: 0;
  border-bottom: 1px solid var(--line);
  list-style: none;
}
.section:nth-last-child(3) {
  padding-bottom: 19px;
  margin-bottom: 2px;
}
.section button, .actions button {
  display: flex;
  align-items: center;
  gap: 1px;
  height: 10px;
}
.section .icon, .actions .icon {
  width: 8px;
  height: 8px;
}
.actions {
  display: grid;
  grid-template-columns: 36px 1fr;
  grid-auto-rows: 1fr;
  height: 76px;
}
.actions button {
  height: auto;
  min-width: 0;
}
.actions .off {
  opacity: 0.5;
}
.extras {
  display: grid;
  grid-template-columns: repeat(6, 10px);
  grid-auto-rows: 10px;
  align-items: center;
  margin-top: 8px;
}
.extras .icon {
  width: 8px;
  height: 8px;
}

footer {
  display: flex;
  flex: none;
  height: 34px;
  box-sizing: border-box;
  padding-top: 3px;
}
.layers {
  display: flex;
  flex-direction: column;
  align-items: center;
  width: 31px;
  height: 29px;
  border-right: 1px solid var(--line);
}
.layers button {
  display: inline-grid;
  place-items: center;
  width: 10px;
  height: 10px;
}
.layers > div {
  display: flex;
}
.layers .icon {
  width: 8px;
  height: 8px;
}
.marks {
  display: flex;
  flex-direction: column;
  width: 89px;
  padding-left: 4px;
}
.marks button {
  display: flex;
  align-items: center;
  gap: 2px;
  height: 10px;
}
.marks .dim {
  color: #a4aab5;
}
.unmark {
  width: 51px;
  height: 9px;
  border: 1px solid #d3d9e4;
  border-radius: 1px;
  background: #fff;
}
.picker {
  height: 10px;
  margin-left: 13px;
}
.mark-tools {
  display: flex;
  align-self: flex-end;
  margin: 0 8px 1px auto;
}
.modes {
  width: 71px;
  overflow: hidden;
}
.mode-row {
  display: grid;
  grid-template-columns: repeat(4, 18px);
}
.mode-row button {
  display: flex;
  flex-direction: column;
  align-items: center;
}
.mode-row .icon {
  width: 9px;
  height: 9px;
}
.mode-row .off {
  opacity: 0.6;
}
.view {
  display: flex;
  align-items: center;
  height: 9px;
  margin-top: 3px;
  box-sizing: border-box;
  border: 1px solid #b9bec8;
  background: #f0f1f3;
  color: #777;
}
.view select {
  flex: 1;
  height: 7px;
  line-height: 7px;
}
.view .icon {
  width: 6px;
  height: 6px;
}

.status {
  display: flex;
  flex: none;
  height: 10px;
  box-sizing: border-box;
  border-top: 1px solid #c4ccda;
}
.cell {
  display: flex;
  align-items: center;
  box-sizing: border-box;
  padding-left: 2px;
  border-right: 1px solid #c4ccda;
}
.first {
  width: 105px;
}
.small {
  width: 32px;
}
.message {
  flex: 1;
}
.tiny {
  justify-content: center;
  width: 9px;
  padding: 0;
}
.coord {
  width: 34px;
  padding-left: 4px;
}
.leds {
  justify-content: center;
  width: 18px;
  padding: 0;
  border: 0;
}
.led {
  width: 5px;
  height: 5px;
  border-radius: 50%;
  background: #3fae49;
}
.leds .led {
  width: 4px;
  height: 4px;
}
.led.dark {
  background: #3c3f45;
}
.led.grey {
  background: #777c84;
}
</style>
